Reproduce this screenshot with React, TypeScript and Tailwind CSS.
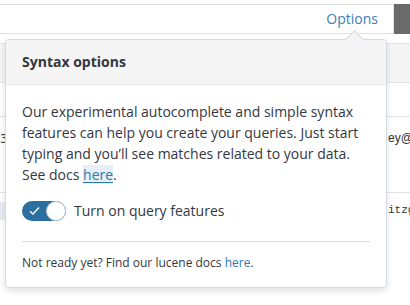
export default function App() {
  return (
    <div className="relative w-[410px] h-[305px] overflow-hidden bg-white font-['Open_Sans',sans-serif] text-[#343741]">
      {/* query bar */}
      <div className="mt-[4px] flex h-[30px]">
        <div className="flex flex-1 items-center justify-end border-y border-r border-[#e0e0e0] pr-[15px]">
          <span className="text-[14px] leading-none text-[#3a80b3]">Options</span>
        </div>
        <div className="w-[16px] bg-[#6b6b6b]" />
      </div>

      {/* table behind the popover */}
      <div className="mt-[9px] text-[13px]">
        <div className="h-[40px] border-y border-[#e3e3e3] bg-[#f5f5f5]" />
        <div className="h-[34px] border-b border-[#e3e3e3]" />
        <div className="flex h-[76px] border-b border-[#e3e3e3] pt-[12px]">
          <div className="w-[5px] overflow-hidden">
            <span className="font-['DejaVu_Sans',sans-serif] text-[12px]">3</span>
          </div>
          <div className="ml-auto w-[22px] overflow-hidden whitespace-nowrap font-['Liberation_Sans',sans-serif] text-[12px] text-[#333]">
            ey@mail.com
          </div>
        </div>
        <div className="flex pt-[9px]">
          <div className="h-[18px] w-[5px] bg-[#e9edf3]" />
          <div className="ml-auto w-[22px] overflow-hidden whitespace-nowrap font-['Liberation_Mono',monospace] text-[11px] text-[#333]">
            itzgerald
          </div>
        </div>
      </div>

      {/* popover */}
      <div className="absolute left-[5px] top-[39px] w-[382px] rounded-[4px] border border-[#d3dae6] bg-white shadow-[0_3px_6px_rgba(0,0,0,0.12)]">
        <div className="absolute -top-[7px] left-[342px] h-[13px] w-[13px] rotate-45 border-l border-t border-[#d3dae6] bg-[#f5f5f5]" />
        <div className="relative rounded-t-[4px] border-b border-[#eaeaea] bg-[#f5f5f5] px-[16px] py-[12px]">
          <h3 className="text-[14px] font-bold leading-[20px]">Syntax options</h3>
        </div>
        <div className="px-[16px] pt-[16px] pb-[15px]">
          <p className="text-[14px] leading-[21px]">
            Our experimental autocomplete and simple syntax features can help you create your queries. Just start typing and you’ll see matches related to your data. See docs{' '}
            <a className="bg-[#e6eff6] text-[#2f79ae] underline underline-offset-2">here</a>.
          </p>
          <div className="mt-[16px] flex items-center gap-[8px]">
            <div className="relative h-[20px] w-[44px] rounded-full bg-[#2b6fa1]">
              <svg className="absolute left-[7px] top-[5px]" width="11" height="10" viewBox="0 0 11 10" fill="none">
                <path d="M1 5.2 L4 8 L10 1.5" stroke="white" strokeWidth="1.3" />
              </svg>
              <div className="absolute right-0 top-0 h-[20px] w-[20px] rounded-full border border-[#c2c8d0] bg-white" />
            </div>
            <span className="text-[14px] leading-[20px]">Turn on query features</span>
          </div>
          <div className="mt-[20px] border-t border-[#d9dde3] pt-[12px] text-[12px] leading-[18px]">
            Not ready yet? Find our lucene docs <a className="text-[#2f79ae]">here</a>.
          </div>
        </div>
      </div>
    </div>
  );
}
